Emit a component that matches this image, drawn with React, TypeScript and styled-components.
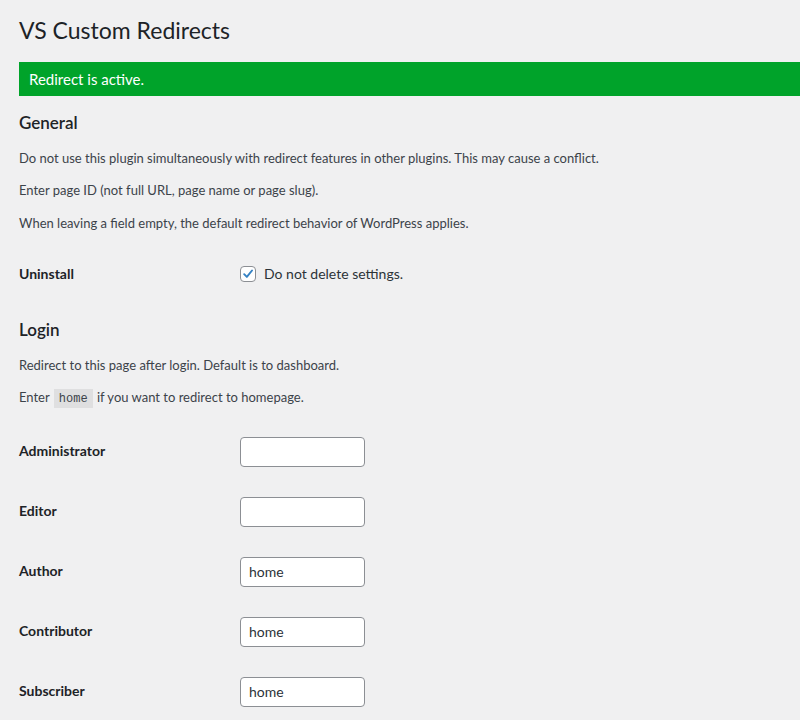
import { useState } from 'react'
import styled, { createGlobalStyle } from 'styled-components'

const GlobalStyle = createGlobalStyle`
  html, body {
    margin: 0;
    padding: 0;
    background: #f0f0f1;
  }
  body {
    font-family: Lato, "Liberation Sans", sans-serif;
    color: #3c434a;
    font-size: 13px;
  }
  * {
    box-sizing: border-box;
  }
`

interface RoleField {
  label: string
  value: string
}

const roles: RoleField[] = [
  { label: 'Administrator', value: '' },
  { label: 'Editor', value: '' },
  { label: 'Author', value: 'home' },
  { label: 'Contributor', value: 'home' },
  { label: 'Subscriber', value: 'home' },
]

const App = () => {
  const [keepSettings, setKeepSettings] = useState(true)
  const [values, setValues] = useState(roles.map(r => r.value))

  const handleChange = (index: number, value: string) => {
    setValues(state => state.map((v, i) => (i === index ? value : v)))
  }

  return (
    <Wrap>
      <GlobalStyle />
      <PageTitle>VS Custom Redirects</PageTitle>

      <Notice>Redirect is active.</Notice>

      <SectionTitle>General</SectionTitle>
      <Text>Do not use this plugin simultaneously with redirect features in other plugins. This may cause a conflict.</Text>
      <Text>Enter page ID (not full URL, page name or page slug).</Text>
      <Text>When leaving a field empty, the default redirect behavior of WordPress applies.</Text>

      <FieldTable>
        <FieldRow>
          <FieldLabel>Uninstall</FieldLabel>
          <CheckLabel>
            <CheckBox
              type="button"
              role="checkbox"
              aria-checked={keepSettings}
              onClick={() => setKeepSettings(state => !state)}
            >
              {keepSettings && (
                <svg width="16" height="16" viewBox="0 0 16 16">
                  <path d="M3.6 8.2 L6.7 11.3 L12.6 4" fill="none" stroke="#3582c4" strokeWidth="2.2" strokeLinecap="round" strokeLinejoin="round" />
                </svg>
              )}
            </CheckBox>
            Do not delete settings.
          </CheckLabel>
        </FieldRow>
      </FieldTable>

      <SectionTitle $top="16px">Login</SectionTitle>
      <Text>Redirect to this page after login. Default is to dashboard.</Text>
      <Text>Enter <Code>home</Code> if you want to redirect to homepage.</Text>

      <FieldTable $top="12px">
        {roles.map((role, index) => (
          <FieldRow key={role.label}>
            <FieldLabel>{role.label}</FieldLabel>
            <FieldCell>
              <TextInput
                type="text"
                value={values[index]}
                onChange={e => handleChange(index, e.target.value)}
              />
            </FieldCell>
          </FieldRow>
        ))}
      </FieldTable>
    </Wrap>
  )
}

export default App

const Wrap = styled.div`
  padding: 15px 0 0 19px;
  display: flex;
  flex-direction: column;
`

const PageTitle = styled.h1`
  margin: 0 0 17px;
  padding: 0;
  font-size: 23px;
  font-weight: 400;
  line-height: 30px;
  color: #1d2327;
`

const Notice = styled.div`
  height: 34px;
  display: flex;
  align-items: center;
  padding: 0 10px;
  background: #00a32a;
  color: #fff;
  font-size: 15px;
`

const SectionTitle = styled.h2<{ $top?: string }>`
  margin: ${p => p.$top || '16px'} 0 1.5px;
  font-size: 17px;
  font-weight: 600;
  line-height: 22px;
  color: #1d2327;
`

const Text = styled.p`
  margin: 13px 0 0;
  font-size: 13px;
  line-height: 19.5px;
  color: #3c434a;
`

const Code = styled.code`
  font-family: "Liberation Mono", "DejaVu Sans Mono", monospace;
  font-size: 12px;
  background: rgba(0, 0, 0, 0.07);
  padding: 3px 5px 2px;
  margin: 0 1px;
  color: #3c434a;
`

const FieldTable = styled.div<{ $top?: string }>`
  margin-top: ${p => p.$top || '12px'};
  display: flex;
  flex-direction: column;
`

const FieldRow = styled.div`
  display: grid;
  grid-template-columns: 221px 1fr;
  align-items: start;
`

const FieldLabel = styled.div`
  padding: 20px 0;
  font-size: 14px;
  font-weight: 700;
  line-height: 18px;
  color: #1d2327;
`

const FieldCell = styled.div`
  padding: 15px 0;
`

const CheckLabel = styled.label`
  display: flex;
  align-items: center;
  gap: 8px;
  padding: 20px 0;
  font-size: 14px;
  line-height: 18px;
  color: #2c3338;
  cursor: pointer;
`

const CheckBox = styled.button`
  width: 16px;
  height: 16px;
  padding: 0;
  margin: 0;
  border: 1px solid #8c8f94;
  border-radius: 4px;
  background: #fff;
  display: flex;
  align-items: center;
  justify-content: center;
  cursor: pointer;

  svg {
    display: block;
  }
`

const TextInput = styled.input`
  display: block;
  width: 125px;
  height: 30px;
  padding: 0 8px;
  border: 1px solid #8c8f94;
  border-radius: 4px;
  background: #fff;
  font-family: Lato, "Liberation Sans", sans-serif;
  font-size: 14px;
  color: #2c3338;
  outline: none;

  &:focus {
    border-color: #2271b1;
    box-shadow: 0 0 0 1px #2271b1;
  }
`
